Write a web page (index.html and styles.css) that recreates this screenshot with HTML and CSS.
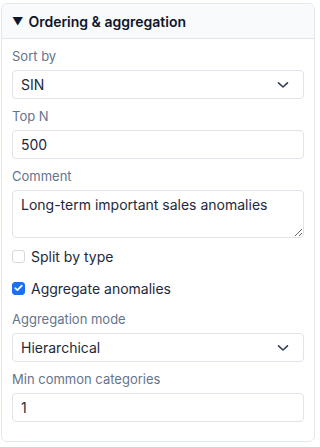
FILE: index.html
```html
<!DOCTYPE html>
<html>
<head>
<meta charset="utf-8">
<link rel="stylesheet" href="styles.css">
</head>
<body>
<div class="page">
  <section class="panel">
    <div class="panel-head"><span class="caret">▼</span><span class="title">Ordering &amp; aggregation</span></div>
    <div class="panel-body">
      <div class="field">
        <label class="lbl">Sort by</label>
        <div class="select">
          <span class="val">SIN</span>
          <svg class="chev" width="12" height="8" viewBox="0 0 12 8"><path d="M1.5 1.8 L6 6 L10.5 1.8" fill="none" stroke="#334155" stroke-width="1.6" stroke-linecap="round" stroke-linejoin="round"/></svg>
        </div>
      </div>
      <div class="field">
        <label class="lbl">Top N</label>
        <input class="inp" type="text" value="500">
      </div>
      <div class="field">
        <label class="lbl">Comment</label>
        <textarea class="ta">Long-term important sales anomalies</textarea>
      </div>
      <div class="checks">
        <label class="check"><span class="box"></span><span>Split by type</span></label>
        <label class="check"><span class="box on"><svg width="9" height="8" viewBox="0 0 9 8"><path d="M1.2 4.2 L3.4 6.2 L7.8 1.6" fill="none" stroke="#fff" stroke-width="1.7" stroke-linecap="round" stroke-linejoin="round"/></svg></span><span>Aggregate anomalies</span></label>
      </div>
      <div class="field">
        <label class="lbl">Aggregation mode</label>
        <div class="select">
          <span class="val">Hierarchical</span>
          <svg class="chev" width="12" height="8" viewBox="0 0 12 8"><path d="M1.5 1.8 L6 6 L10.5 1.8" fill="none" stroke="#334155" stroke-width="1.6" stroke-linecap="round" stroke-linejoin="round"/></svg>
        </div>
      </div>
      <div class="field">
        <label class="lbl">Min common categories</label>
        <input class="inp" type="text" value="1">
      </div>
    </div>
  </section>
</div>
</body>
</html>
```

FILE: styles.css
```css
* { box-sizing: border-box; }
html, body { margin: 0; padding: 0; background: #ffffff; }
body { font-family: Inter, "Noto Sans", sans-serif; color: #1e293b; }
.page { padding: 3px 5px 0 1px; }
.panel {
  border: 1px solid #e2e8f0;
  border-radius: 6px;
  overflow: hidden;
  background: #fff;
}
.panel-head {
  height: 35px;
  background: #f8fafc;
  border-bottom: 1px solid #e2e8f0;
  display: flex;
  align-items: center;
  padding-left: 10px;
  gap: 5px;
  font-size: 14px;
  font-weight: 600;
  color: #0f172a;
}
.caret { font-size: 11px; line-height: 1; }
.panel-body {
  padding: 8px 10px 19px 10px;
  display: flex;
  flex-direction: column;
  gap: 8px;
}
.field { display: flex; flex-direction: column; gap: 4px; }
.lbl { font-size: 13px; line-height: 19px; color: #64748b; }
.select, .inp {
  height: 29px;
  border: 1px solid #dfe3ea;
  border-radius: 4px;
  background: #fff;
  font-family: inherit;
  font-size: 14px;
  color: #1e293b;
  padding: 0 8px;
}
.select { display: flex; align-items: center; justify-content: space-between; padding-right: 14px; }
.inp { outline: none; width: 100%; }
.ta {
  height: 48px;
  border: 1px solid #dfe3ea;
  border-radius: 4px;
  font-family: inherit;
  font-size: 14px;
  line-height: 18px;
  color: #1e293b;
  padding: 5px 8px;
  resize: vertical;
  width: 100%;
  outline: none;
}
.checks { display: flex; flex-direction: column; gap: 12px; margin-bottom: 4px; }
.check { display: flex; align-items: center; gap: 6px; height: 20px; font-size: 14px; color: #1e293b; }
.box {
  width: 13px; height: 13px;
  border: 1px solid #d4d8df;
  border-radius: 3px;
  background: #fff;
  display: flex; align-items: center; justify-content: center;
}
.box.on { background: #1a6ff4; border-color: #1a6ff4; }
```
